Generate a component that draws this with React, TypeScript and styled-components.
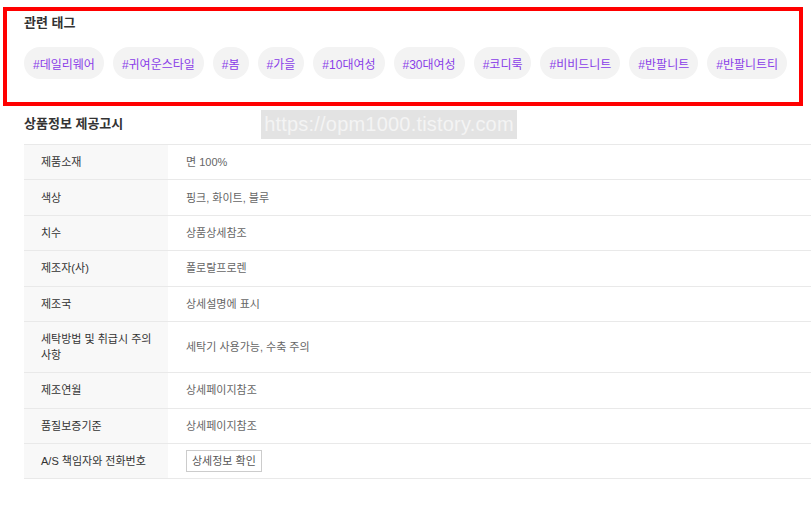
import React from "react";
import styled, { createGlobalStyle } from "styled-components";

const Global = createGlobalStyle`
  html, body { margin: 0; padding: 0; background: #fff; }
  body { font-family: "Liberation Sans", "Noto Sans CJK KR", sans-serif; color: #333; }
  * { box-sizing: border-box; }
`;

const Page = styled.div`
  position: relative;
  width: 811px;
  min-height: 506px;
  overflow: hidden;
`;

const TagSection = styled.section`
  margin: 7px 8px 0 3px;
  border: 4px solid #ff0000;
  padding: 3px 17px 23px;
`;

const Title = styled.h3`
  margin: 0;
  font-size: 13px;
  line-height: 18px;
  font-weight: 700;
  color: #333;
`;

const TagList = styled.ul`
  list-style: none;
  margin: 15px 0 0;
  padding: 0;
  display: flex;
  gap: 9px;
  white-space: nowrap;
`;

const Tag = styled.li`
  height: 32px;
  display: flex;
  align-items: center;
  padding: 0 9px;
  border-radius: 16px;
  background: #f3f3f3;
  color: #8a3ee8;
  font-size: 12px;
`;

const InfoSection = styled.section`
  padding: 9px 0 0 24px;
`;

const InfoTitle = styled(Title)`
  margin-bottom: 11px;
`;

const Table = styled.table`
  width: calc(100% + 20px);
  border-collapse: collapse;
  border-top: 1px solid #e9e9e9;
  font-size: 11px;
  line-height: 16px;
`;

const Row = styled.tr`
  border-bottom: 1px solid #e9e9e9;
`;

const Th = styled.th`
  width: 144px;
  padding: 9.2px 16px 9.2px 17px;
  background: #f8f8f8;
  color: #333;
  font-weight: 400;
  text-align: left;
  vertical-align: middle;
`;

const Td = styled.td`
  padding: 9.2px 18px;
  color: #666;
  vertical-align: middle;
`;

const DetailButton = styled.button`
  height: 22px;
  padding: 0 5px;
  border: 1px solid #cccccc;
  background: #fff;
  color: #555;
  font-family: inherit;
  font-size: 11px;
  line-height: 20px;
  margin: -3px 0;
  display: block;
`;

const Watermark = styled.div`
  position: absolute;
  left: 261px;
  top: 110px;
  width: 256px;
  height: 29px;
  background: #e3e3e3;
  color: #f4f4f4;
  font-family: "Liberation Sans", sans-serif;
  font-size: 20px;
  line-height: 29px;
  text-align: center;
  letter-spacing: 0.2px;
`;

const tags = [
  "데일리웨어",
  "귀여운스타일",
  "봄",
  "가을",
  "10대여성",
  "30대여성",
  "코디룩",
  "비비드니트",
  "반팔니트",
  "반팔니트티",
];

const rows: [string, React.ReactNode][] = [
  ["제품소재", "면 100%"],
  ["색상", "핑크, 화이트, 블루"],
  ["치수", "상품상세참조"],
  ["제조자(사)", "폴로랄프로렌"],
  ["제조국", "상세설명에 표시"],
  ["세탁방법 및 취급시 주의 사항", "세탁기 사용가능, 수축 주의"],
  ["제조연월", "상세페이지참조"],
  ["품질보증기준", "상세페이지참조"],
  ["A/S 책임자와 전화번호", <DetailButton type="button">상세정보 확인</DetailButton>],
];

export default function App() {
  return (
    <Page>
      <Global />
      <TagSection>
        <Title>관련 태그</Title>
        <TagList>
          {tags.map((t) => (
            <Tag key={t}>#{t}</Tag>
          ))}
        </TagList>
      </TagSection>
      <InfoSection>
        <InfoTitle>상품정보 제공고시</InfoTitle>
        <Table>
          <tbody>
            {rows.map(([k, v]) => (
              <Row key={k}>
                <Th>{k}</Th>
                <Td>{v}</Td>
              </Row>
            ))}
          </tbody>
        </Table>
      </InfoSection>
      <Watermark>https://opm1000.tistory.com</Watermark>
    </Page>
  );
}
